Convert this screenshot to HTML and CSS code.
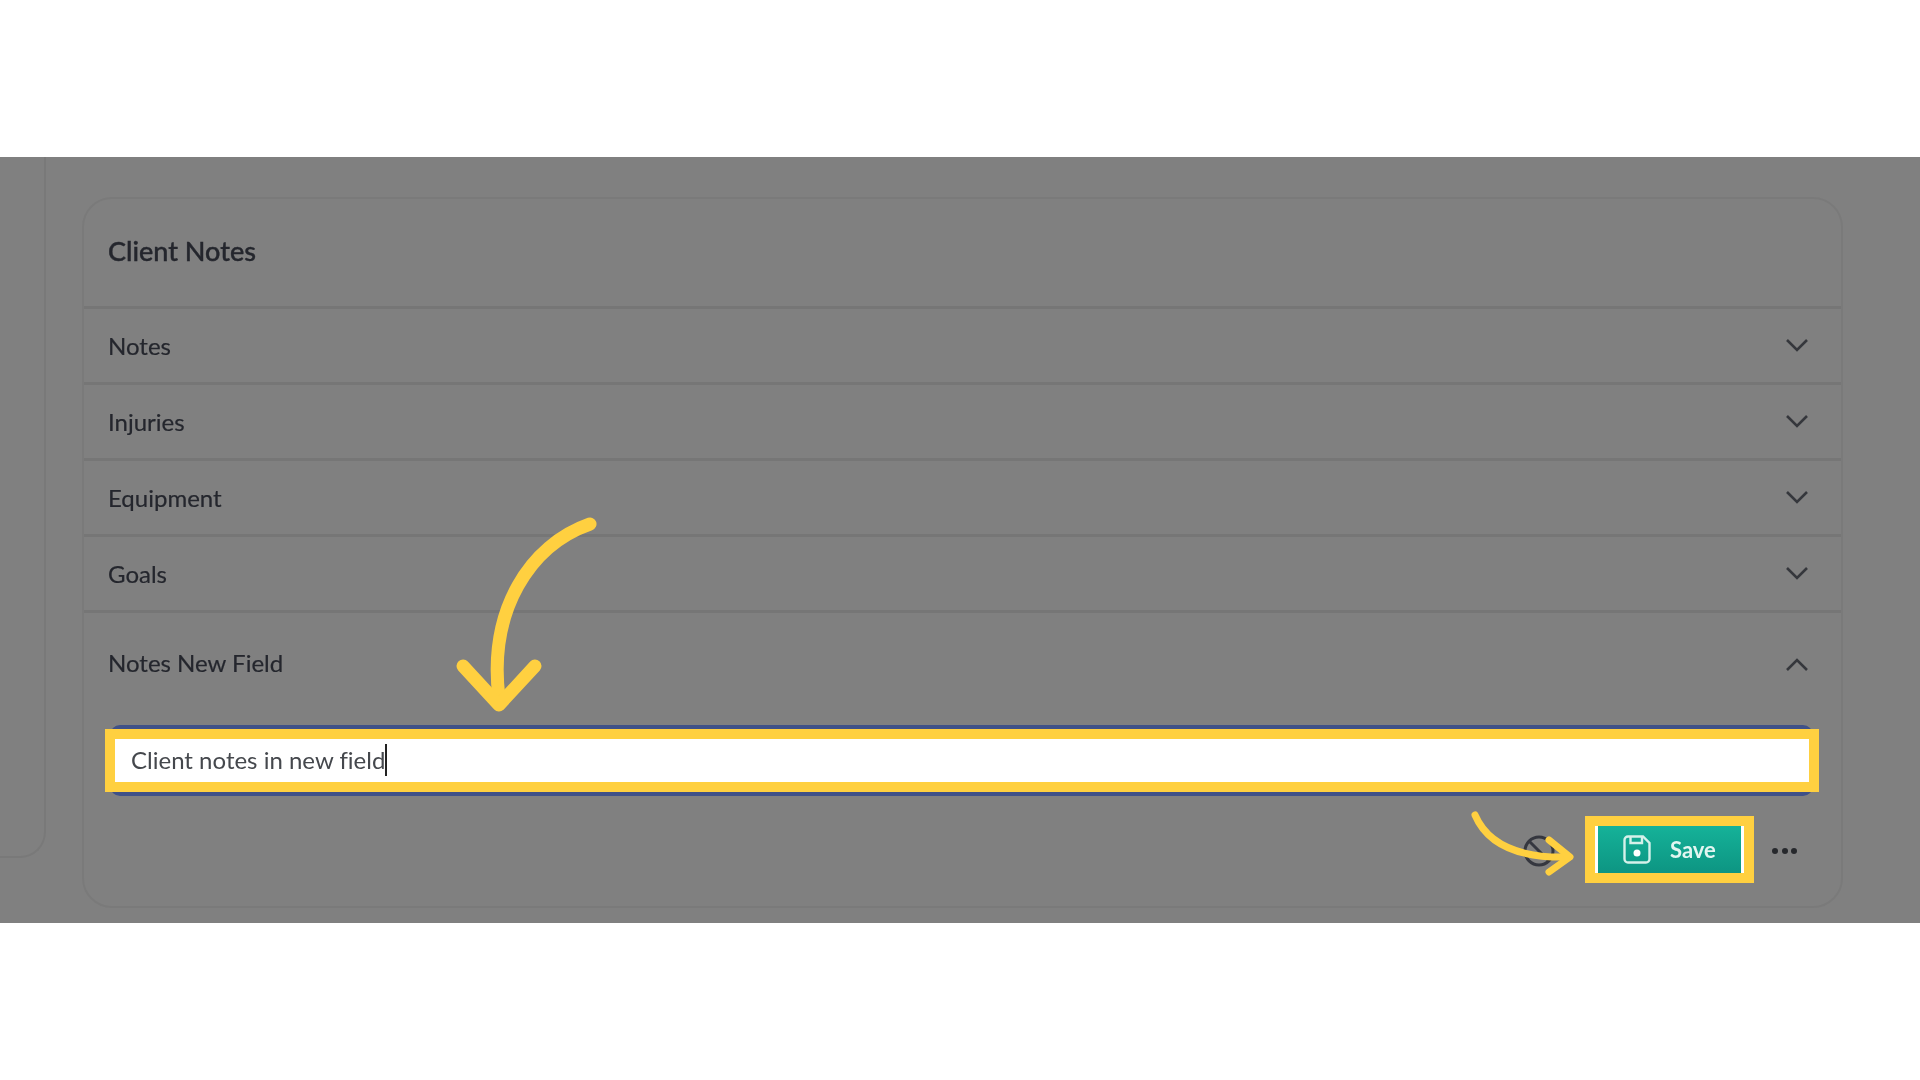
FILE: index.html
```html
<!DOCTYPE html>
<html lang="en">
<head>
    <meta charset="UTF-8">
    <meta name="viewport" content="width=device-width, initial-scale=1.0">
    <title>Client Notes</title>
    <link rel="stylesheet" href="styles.css">
</head>
<body>
    <div class="band">
        <div class="side-stub"></div>

        <div class="card">
            <div class="card-title"><h2 class="soft">Client Notes</h2></div>

            <div class="row">
                <span class="soft">Notes</span>
                <svg class="chevron soft" viewBox="0 0 24 14"><path d="M2 2l10 10L22 2"/></svg>
            </div>
            <div class="row">
                <span class="soft">Injuries</span>
                <svg class="chevron soft" viewBox="0 0 24 14"><path d="M2 2l10 10L22 2"/></svg>
            </div>
            <div class="row">
                <span class="soft">Equipment</span>
                <svg class="chevron soft" viewBox="0 0 24 14"><path d="M2 2l10 10L22 2"/></svg>
            </div>
            <div class="row">
                <span class="soft">Goals</span>
                <svg class="chevron soft" viewBox="0 0 24 14"><path d="M2 2l10 10L22 2"/></svg>
            </div>

            <div class="row row-open">
                <span class="soft">Notes New Field</span>
                <svg class="chevron chevron-up soft" viewBox="0 0 24 14"><path d="M2 12L12 2l10 10"/></svg>
            </div>
            <div class="note-input">
                <div class="note-field"><span class="note-text soft">Client notes in new field</span></div>
            </div>

            <div class="card-footer">
                <svg class="ban-icon soft" viewBox="0 0 32 32"><circle cx="16" cy="16" r="14"/><path d="M6 6l20 20"/></svg>
                <button class="save-btn">
                    <svg class="save-icon soft" viewBox="0 0 28 29">
                        <path d="M5 1.5h15l6.5 6.5v16a3.5 3.5 0 0 1-3.5 3.5H5A3.5 3.5 0 0 1 1.5 24V5A3.5 3.5 0 0 1 5 1.5z"/>
                        <path d="M7.500 1.500v6.500h11.500v-6.500"/>
                        <circle class="save-dot" cx="14" cy="18" r="3.500"/>
                    </svg>
                    <span class="soft">Save</span>
                </button>
                <div class="more-dots soft"><i></i><i></i><i></i></div>
            </div>
        </div>

        <!-- yellow tutorial arrows drawn on top of the page -->
        <svg class="arrows" viewBox="0 157 1920 766">
            <path class="arrow-big" d="M590 524C530 545 488 610 499 698"/>
            <path class="arrow-big" d="M463 666l36 39 36-39"/>
            <path class="arrow-small" d="M1475 815C1490 850 1530 858 1568 857"/>
            <path class="arrow-small" d="M1549 840l21 17-21 15"/>
        </svg>
    </div>
</body>
</html>
```

FILE: styles.css
```css
* {
    box-sizing: border-box;
}
body {
    margin: 0;
    padding-top: 157px;
    height: 1080px;
    overflow: hidden;
    background-color: #fff;
    font-family: Lato, "Open Sans", sans-serif;
    font-variant-ligatures: none;
    color: #24262d;
}
.band {
    position: relative;
    display: flex;
    align-items: flex-start;
    height: 766px;
    background-color: #808080;
}
.soft {
    filter: blur(0.6px);
}
.side-stub {
    flex: none;
    width: 46px;
    height: 701px;
    border-right: 2px solid #797979;
    border-bottom: 2px solid #797979;
    border-bottom-right-radius: 26px;
}
.card {
    flex: none;
    width: 1761px;
    height: 711px;
    margin: 40px 0 0 36px;
    border: 2px solid #7a7a7a;
    border-radius: 30px;
}
.card-title {
    height: 110px;
    padding: 0 24px 4px;
    display: flex;
    align-items: center;
    border-bottom: 3px solid #767676;
}
.card-title h2 {
    margin: 0;
    font-size: 27px;
    font-weight: 500;
    -webkit-text-stroke: 0.4px #24262d;
}
.row {
    height: 76px;
    padding: 0 32px 0 24px;
    display: flex;
    justify-content: space-between;
    align-items: center;
    border-bottom: 3px solid #767676;
    font-size: 24px;
    -webkit-text-stroke: 0.2px #24262d;
}
.row-open {
    height: 104px;
    padding-bottom: 6px;
    margin-bottom: 8px;
    border-bottom: none;
}
.chevron {
    width: 24px;
    height: 14px;
    margin-bottom: 2px;
    fill: none;
    stroke: #35373c;
    stroke-width: 2.6;
}
.chevron-up {
    margin: 6px 0 0;
}
.note-input {
    height: 71px;
    margin: 0 28px 0 26px;
    background-color: #fff;
    border-top: 4px solid #3f5188;
    border-bottom: 4px solid #3f5188;
    border-radius: 10px;
    padding: 10px 4px 10px 5px;
}
.note-field {
    height: 43px;
    padding: 0 0 2px 16px;
    display: flex;
    align-items: center;
    background-color: #fff;
    outline: 10px solid #ffd040;
    font-size: 24px;
    color: #45484d;
}
.note-text {
    border-right: 2px solid #222;
    line-height: 32px;
}
.card-footer {
    height: 110px;
    padding: 0 44px 3px 0;
    display: flex;
    justify-content: flex-end;
    align-items: center;
}
.ban-icon {
    width: 32px;
    height: 32px;
    margin: 3px 40px 0 0;
    fill: none;
    stroke: #35373f;
    stroke-width: 3;
}
.save-btn {
    width: 149px;
    height: 47px;
    padding: 0 0 0 25px;
    display: flex;
    align-items: center;
    gap: 19px;
    border: none;
    border-left: 3px solid #fff;
    border-right: 3px solid #fff;
    background: linear-gradient(#15b299, #0d9582) padding-box;
    outline: 10px solid #ffd040;
    font-family: inherit;
    font-size: 22px;
    font-weight: 700;
    color: #e2f6f1;
}
.save-icon {
    width: 28px;
    height: 29px;
    fill: none;
    stroke: #d5f1ea;
    stroke-width: 2.4;
}
.save-dot {
    fill: #fff;
    stroke: none;
}
.more-dots {
    margin: 3px 0 0 28px;
    display: flex;
    gap: 3.5px;
}
.more-dots i {
    width: 6px;
    height: 6px;
    border-radius: 50%;
    background-color: #26282c;
}
.arrows {
    position: absolute;
    left: 0;
    top: 0;
    width: 1920px;
    height: 766px;
    pointer-events: none;
    fill: none;
    stroke: #ffd040;
    stroke-linecap: round;
    stroke-linejoin: round;
}
.arrow-big {
    stroke-width: 13;
}
.arrow-small {
    stroke-width: 7;
}
```
